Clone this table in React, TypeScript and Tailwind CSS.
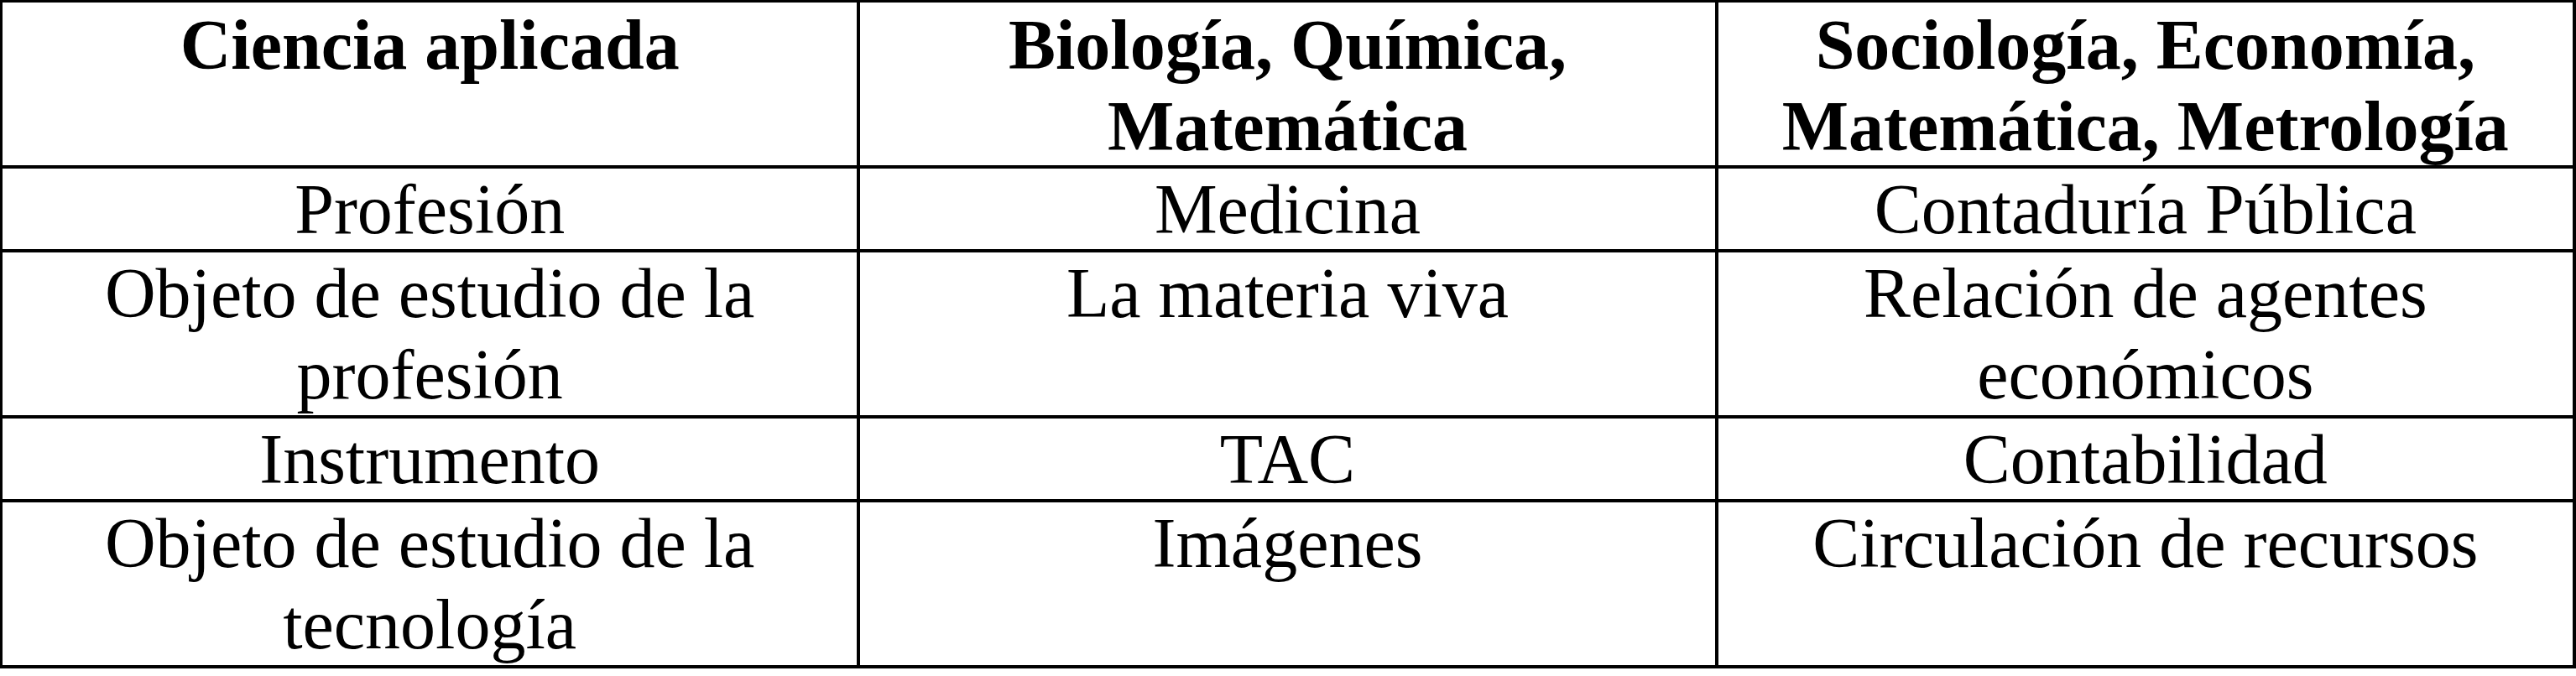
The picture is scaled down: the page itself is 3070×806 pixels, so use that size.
const rows: [string, string, string][] = [
  ["Profesión", "Medicina", "Contaduría Pública"],
  ["Objeto de estudio de la profesión", "La materia viva", "Relación de agentes económicos"],
  ["Instrumento", "TAC", "Contabilidad"],
  ["Objeto de estudio de la tecnología", "Imágenes", "Circulación de recursos"],
];

const header = ["Ciencia aplicada", "Biología, Química, Matemática", "Sociología, Economía, Matemática, Metrología"];

export default function App() {
  return (
    <div className="w-[3070px] h-[806px] bg-white text-black font-['Liberation_Serif',serif]">
      {/* table lines come from the black background showing through the gaps */}
      <div className="grid grid-cols-3 grid-rows-[194px_96px_194px_96px_194px] gap-[4px] bg-black pt-[3px] pl-[3px] pr-[4px] pb-[4px] w-[3070px]">
        {header.map((h) => (
          <div key={h} className="bg-white px-[10px] pt-[2px] text-center text-[84px] leading-[97px] font-bold">
            {h}
          </div>
        ))}
        {rows.map((r) =>
          r.map((c, i) => (
            <div key={r[0] + i} className="bg-white px-[10px] text-center text-[84px] leading-[97px] overflow-visible">
              {c}
            </div>
          ))
        )}
      </div>
    </div>
  );
}
